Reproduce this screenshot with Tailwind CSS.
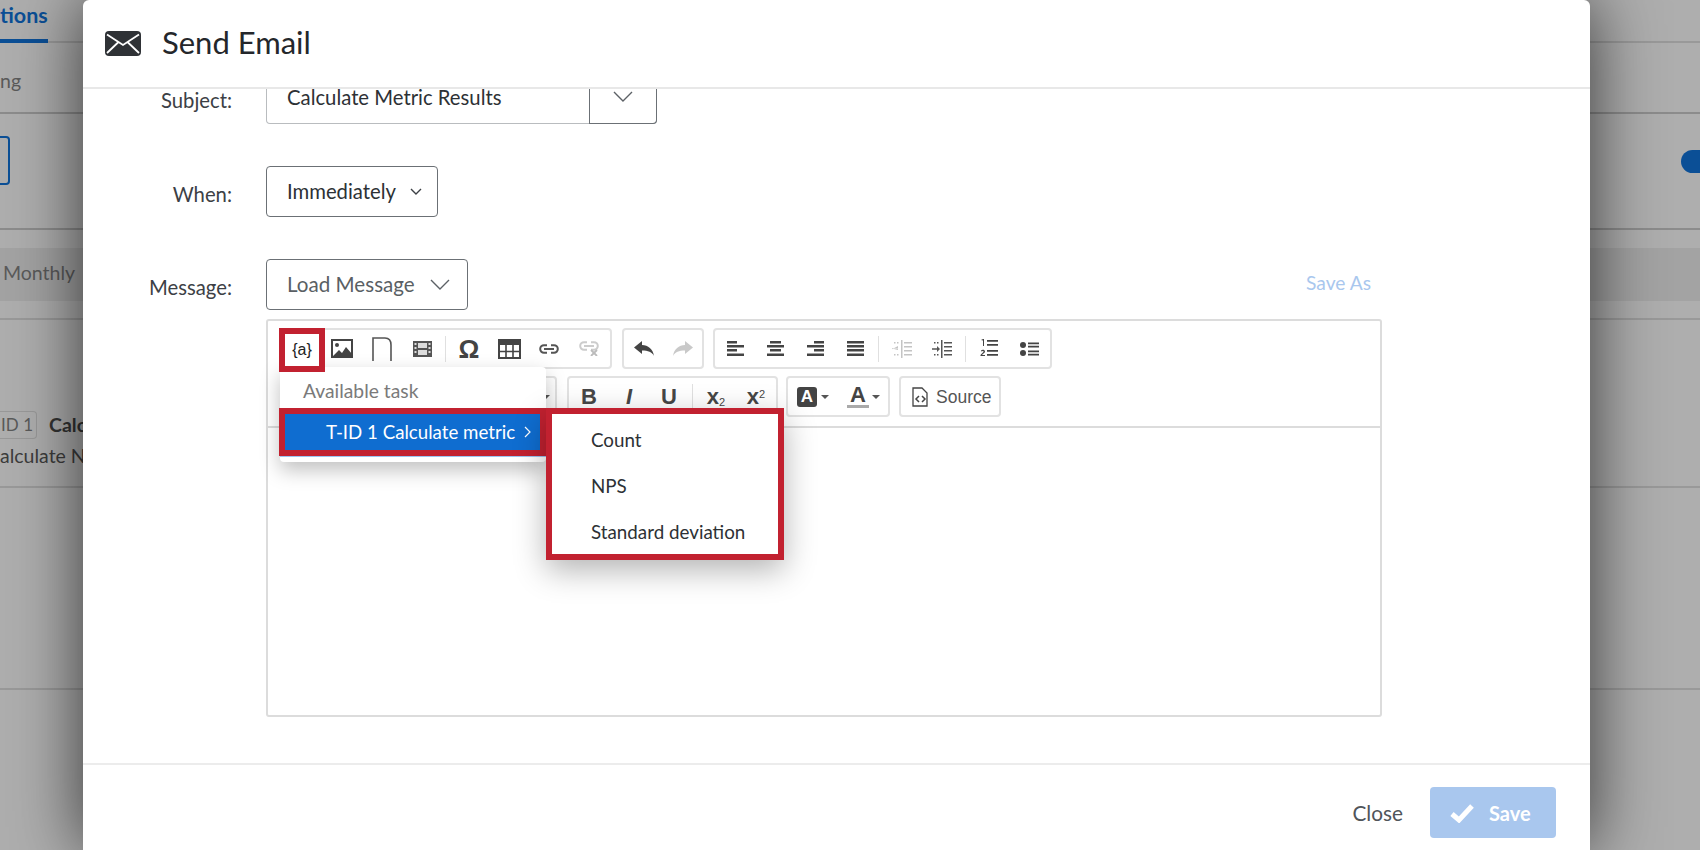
<!DOCTYPE html>
<html lang="en">
<head>
    <meta charset="UTF-8">
    <title>Send Email</title>
    <script src="https://cdn.jsdelivr.net/npm/@tailwindcss/browser@4"></script>
</head>
<body class="bg-[#aeaeae] font-['Lato','Open_Sans',sans-serif] text-[#32373c]">
<div class="relative w-[1700px] h-[850px] overflow-hidden">

    <!-- page behind the modal -->
    <div class="text-[19.500px] text-[#5a5a5a]">
        <div class="h-[43px] border-b-2 border-[#999]">
            <div class="w-[48px] h-[43px] border-b-4 border-[#0b4f96] text-right text-[21.500px] font-bold text-[#0b4f96] leading-[30px] pr-[3px] whitespace-nowrap">tions</div>
        </div>
        <div class="h-[71px] border-b-2 border-[#8c8c8c] pt-[25px] leading-[26px]">ng</div>
        <div class="h-[116px] border-b-2 border-[#8c8c8c] flex justify-between items-start pt-[22px]">
            <div class="w-[10px] h-[49px] border-2 border-l-0 border-[#0b4f96] rounded-r-[4px]"></div>
            <div class="w-[19px] h-[23px] mt-[14px] bg-[#0b4f96] rounded-l-full"></div>
        </div>
        <div class="h-[90px] border-b-2 border-[#999] pt-[18px]">
            <div class="h-[53px] bg-[#a3a3a3] pl-[3px] leading-[50px]">Monthly</div>
        </div>
        <div class="h-[168px] border-b-2 border-[#999] pt-[91px]">
            <div class="flex items-center h-[28px]">
                <span class="w-[37px] h-[28px] border border-[#999] border-l-0 rounded-r-[4px] text-[17px] text-right pr-[3px] leading-[26px]">ID 1</span>
                <span class="ml-[12px] font-bold text-[#333]">Calculate</span>
            </div>
            <div class="mt-[2px] text-[#3c3c3c] whitespace-nowrap">alculate N</div>
        </div>
        <div class="h-[202px] border-b-2 border-[#999]"></div>
    </div>

    <!-- modal -->
    <div class="absolute left-[83px] top-0 w-[1507px] h-[850px] bg-white rounded-t-[6px] shadow-[0_0_70px_rgba(0,0,0,0.7)] flex flex-col">
        <div class="h-[89px] shrink-0 border-b-2 border-[#e8e8e8] flex items-center pl-[22px]">
            <svg class="w-[36px] h-[25px]" viewBox="0 0 36 25"><rect width="36" height="25" rx="4" fill="#2f3236"/><path d="M2 3.500 L18 14 L34 3.500 M2 22 L13 11.500 M34 22 L23 11.500" fill="none" stroke="#fff" stroke-width="1.800"/></svg>
            <span class="ml-[21px] text-[31px] leading-[36px] -mt-[3px] text-[#24272b]">Send Email</span>
        </div>

        <div class="flex-1 text-[20.300px]">
            <div class="flex">
                <div class="w-[149px] text-right pt-px leading-[20px] text-[#3c4045]">Subject:</div>
                <div class="ml-[34px] w-[391px] h-[35px] flex border border-t-0 border-[#b9bcbf] rounded-b-[4px]">
                    <div class="flex-1 pl-[20px] leading-[17px] text-[#2d3135]">Calculate Metric Results</div>
                    <div class="w-[68px] border border-[#6b7075] border-t-0 -mr-px -mb-px rounded-br-[4px] flex justify-center pt-[2px]">
                        <svg class="w-[20px] h-[11px]" viewBox="0 0 20 11"><path d="M1 1l9 9 9-9" fill="none" stroke="#5c6166" stroke-width="1.400"/></svg>
                    </div>
                </div>
            </div>
            <div class="flex mt-[42px]">
                <div class="w-[149px] text-right pt-[15px] leading-[26px] text-[#3c4045]">When:</div>
                <div class="ml-[34px] w-[172px] h-[51px] border border-[#6b7075] rounded-[4px] flex items-center pl-[20px]">
                    <span class="text-[#2d3135]">Immediately</span>
                    <svg class="ml-[14px] w-[12px] h-[7px]" viewBox="0 0 12 7"><path d="M1 1l5 5 5-5" fill="none" stroke="#3c4045" stroke-width="1.400"/></svg>
                </div>
            </div>
            <div class="flex mt-[42px]">
                <div class="w-[149px] text-right pt-[15px] leading-[26px] text-[#3c4045]">Message:</div>
                <div class="ml-[34px] flex-1 mr-[208px]">
                    <div class="flex justify-between items-start">
                        <div class="w-[202px] h-[51px] border border-[#6b7075] rounded-[4px] flex items-center pl-[20px]">
                            <span class="text-[20.600px] text-[#5a5f64]">Load Message</span>
                            <svg class="ml-[15px] w-[20px] h-[11px]" viewBox="0 0 20 11"><path d="M1 1l9 9 9-9" fill="none" stroke="#5c6166" stroke-width="1.400"/></svg>
                        </div>
                        <div class="mr-[11px] mt-[11px] text-[19.200px] leading-[26px] text-[#a9c7ee]">Save As</div>
                    </div>

                    <!-- editor -->
                    <div class="relative mt-[9px] h-[398px] border-2 border-[#dcdcdc] rounded-[3px] font-['Liberation_Sans',Arial,sans-serif]">
                        <div class="h-[107px] border-b-2 border-[#dcdcdc] pl-[12px] pt-[7px] text-[#474747]">
                            <div class="flex h-[41px]">
                                <div class="flex pr-px border-2 border-[#e2e2e2] rounded-[4px] items-center">
                                    <div class="w-[40px]"></div>
                                    <div class="w-[40px] flex justify-center">
                                        <svg class="w-[22px] h-[19px]" viewBox="0 0 22 19"><rect x="1" y="1" width="20" height="17" fill="none" stroke="#444" stroke-width="2"/><circle cx="6" cy="6" r="2" fill="#444"/><path d="M2 17l6-6 3 3 4-6 6 7v2z" fill="#444"/></svg>
                                    </div>
                                    <div class="w-[40px] flex justify-center">
                                        <svg class="w-[20px] h-[24px]" viewBox="0 0 20 24"><path d="M1 24V1h12c4 0 6 3 6 7v16" fill="none" stroke="#555" stroke-width="1.600"/></svg>
                                    </div>
                                    <div class="w-[40px] flex justify-center">
                                        <svg class="w-[19px] h-[16px]" viewBox="0 0 19 16"><path d="M0 0h19v16H0z" fill="#555"/><path d="M5 2h9v5H5zM5 9h9v5H5z" fill="#ddd"/><path d="M1.500 2h2v2h-2zM1.500 6h2v2h-2zM1.500 10h2v2h-2zM15.500 2h2v2h-2zM15.500 6h2v2h-2zM15.500 10h2v2h-2z" fill="#ddd"/></svg>
                                    </div>
                                    <div class="w-px h-[26px] mx-[3px] bg-[#e0e0e0]"></div>
                                    <div class="w-[40px] text-center text-[26px] leading-[30px] font-bold text-[#444]">Ω</div>
                                    <div class="w-[40px] flex justify-center">
                                        <svg class="w-[23px] h-[20px]" viewBox="0 0 23 20"><rect x="1" y="1" width="21" height="18" fill="none" stroke="#444" stroke-width="2"/><rect x="1" y="1" width="21" height="5" fill="#444"/><path d="M8 6v13M15 6v13M1 12.500h21" stroke="#444" stroke-width="1.600"/></svg>
                                    </div>
                                    <div class="w-[40px] flex justify-center">
                                        <svg class="w-[20px] h-[10px]" viewBox="0 0 20 10"><path d="M8 1.200H5a3.800 3.800 0 0 0 0 7.600h3M12 1.200h3a3.800 3.800 0 0 1 0 7.600h-3M5 5h10" fill="none" stroke="#555" stroke-width="2"/></svg>
                                    </div>
                                    <div class="w-[40px] flex justify-center">
                                        <svg class="w-[20px] h-[15px]" viewBox="0 0 20 15"><path d="M8 1.200H5a3.800 3.800 0 0 0 0 7.600h3M12 1.200h3a3.800 3.800 0 0 1 0 7.600h-3M5 5h10" fill="none" stroke="#ccc" stroke-width="2"/><path d="M12 9l6 6M18 9l-6 6" stroke="#bbb" stroke-width="1.800"/></svg>
                                    </div>
                                </div>
                                <div class="ml-[10px] flex border-2 border-[#e2e2e2] rounded-[4px] items-center">
                                    <div class="w-[39px] flex justify-center">
                                        <svg class="w-[20px] h-[15px]" viewBox="0 0 20 15"><path d="M0 6.500L8 0v4c6 0 11 4 12 11-2-4-6-5.500-12-5.500V13z" fill="#444"/></svg>
                                    </div>
                                    <div class="w-[39px] flex justify-center">
                                        <svg class="w-[20px] h-[15px]" viewBox="0 0 20 15"><path d="M20 6.500L12 0v4C6 4 1 8 0 15c2-4 6-5.500 12-5.500V13z" fill="#c9c9c9"/></svg>
                                    </div>
                                </div>
                                <div class="ml-[9px] flex pr-px border-2 border-[#e2e2e2] rounded-[4px] items-center">
                                    <div class="w-[40px] flex justify-center">
                                        <svg class="w-[17px] h-[15px]" viewBox="0 0 17 15" fill="#444"><path d="M0 0h10v2.500H0zM0 4h17v2.500H0zM0 8h10v2.500H0zM0 12.500h17V15H0z"/></svg>
                                    </div>
                                    <div class="w-[40px] flex justify-center">
                                        <svg class="w-[17px] h-[15px]" viewBox="0 0 17 15" fill="#444"><path d="M3 0h11v2.500H3zM0 4h17v2.500H0zM3 8h11v2.500H3zM0 12.500h17V15H0z"/></svg>
                                    </div>
                                    <div class="w-[40px] flex justify-center">
                                        <svg class="w-[17px] h-[15px]" viewBox="0 0 17 15" fill="#444"><path d="M7 0h10v2.500H7zM0 4h17v2.500H0zM7 8h10v2.500H7zM0 12.500h17V15H0z"/></svg>
                                    </div>
                                    <div class="w-[40px] flex justify-center">
                                        <svg class="w-[17px] h-[15px]" viewBox="0 0 17 15" fill="#444"><path d="M0 0h17v2.500H0zM0 4h17v2.500H0zM0 8h17v2.500H0zM0 12.500h17V15H0z"/></svg>
                                    </div>
                                    <div class="w-px h-[26px] mx-[3px] bg-[#e0e0e0]"></div>
                                    <div class="w-[40px] flex justify-center">
                                        <svg class="w-[20px] h-[18px]" viewBox="0 0 20 18" fill="#c4c4c4"><path d="M9 0h1.500v18H9zM12 2h8v1.500h-8zM12 6h8v1.500h-8zM12 10h8v1.500h-8zM12 14h8v1.500h-8zM0 8.300h6V6l-6 3.200z"/><path d="M0 8.500h6V10z"/><path d="M2 2h1.500v1.500H2zM5 2h1.500v1.500H5zM2 14h1.500v1.500H2zM5 14h1.500v1.500H5z"/></svg>
                                    </div>
                                    <div class="w-[40px] flex justify-center">
                                        <svg class="w-[20px] h-[18px]" viewBox="0 0 20 18" fill="#555"><path d="M9 0h1.500v18H9zM12 2h8v1.500h-8zM12 6h8v1.500h-8zM12 10h8v1.500h-8zM12 14h8v1.500h-8zM0 8.200h5V6l3 3-3 3V9.800H0z"/><path d="M2 2h1.500v1.500H2zM5 2h1.500v1.500H5zM2 14h1.500v1.500H2zM5 14h1.500v1.500H5z"/></svg>
                                    </div>
                                    <div class="w-px h-[26px] mx-[3px] bg-[#e0e0e0]"></div>
                                    <div class="w-[40px] flex justify-center">
                                        <svg class="w-[18px] h-[19px]" viewBox="0 0 18 19" fill="#444"><path d="M7 1h11v1.800H7zM7 5h11v1.800H7zM7 11h11v1.800H7zM7 15h11v1.800H7zM1 1l2-1h1v7H3V1.500zM1 11.500c1-1 4-1 4 1 0 1.500-2 2-3 3.500h3v1H0.500v-1c1-1.500 3-2.500 3-3.500 0-.8-1.500-.5-2.200 0z"/></svg>
                                    </div>
                                    <div class="w-[40px] flex justify-center">
                                        <svg class="w-[19px] h-[14px]" viewBox="0 0 19 14" fill="#444"><circle cx="3" cy="3" r="3"/><circle cx="3" cy="11" r="3"/><path d="M8 0.500h11v1.800H8zM8 3.700h11v1.800H8zM8 8.500h11v1.800H8zM8 11.700h11v1.800H8z"/></svg>
                                    </div>
                                </div>
                            </div>
                            <div class="flex h-[41px] mt-[7px]">
                                <div class="w-[277px] border-2 border-[#e2e2e2] rounded-[4px] flex items-center justify-end pr-[5px]">
                                    <span class="w-0 h-0 border-x-[4px] border-x-transparent border-t-[4px] border-t-[#555]"></span>
                                </div>
                                <div class="ml-[10px] flex border-2 border-[#e2e2e2] rounded-[4px] items-center text-[22px] font-bold leading-[30px]">
                                    <div class="w-[40px] text-center">B</div>
                                    <div class="w-[40px] text-center italic">I</div>
                                    <div class="w-[40px] text-center"><span class="border-b-2 border-[#444] leading-[22px] inline-block">U</span></div>
                                    <div class="w-px h-[26px] mx-[3px] bg-[#e0e0e0]"></div>
                                    <div class="w-[40px] text-center">x<sub class="text-[11px] font-normal">2</sub></div>
                                    <div class="w-[40px] text-center">x<sup class="text-[11px] font-normal">2</sup></div>
                                </div>
                                <div class="ml-[8px] flex border-2 border-[#e2e2e2] rounded-[4px] items-center">
                                    <div class="w-[50px] flex items-center pl-[9px]">
                                        <span class="w-[20px] h-[20px] rounded-[3px] bg-[#444] text-white text-[17px] font-bold leading-[20px] text-center">A</span>
                                        <span class="ml-[4px] w-0 h-0 border-x-[4px] border-x-transparent border-t-[4px] border-t-[#555]"></span>
                                    </div>
                                    <div class="w-[50px] flex items-center pl-[9px]">
                                        <span class="w-[22px] h-[23px] border-b-[3px] border-[#aaa] text-[22px] font-bold leading-[20px] text-center text-[#444]">A</span>
                                        <span class="ml-[3px] w-0 h-0 border-x-[4px] border-x-transparent border-t-[4px] border-t-[#555]"></span>
                                    </div>
                                </div>
                                <div class="ml-[9px] w-[102px] border-2 border-[#e2e2e2] rounded-[4px] flex items-center pl-[11px]">
                                    <svg class="w-[16px] h-[20px]" viewBox="0 0 16 20"><path d="M1 1h9l5 5v13H1z" fill="none" stroke="#444" stroke-width="1.300"/><path d="M7 9l-3 3 3 3M10 9l3 3-3 3" fill="none" stroke="#444" stroke-width="1.500"/></svg>
                                    <span class="ml-[8px] text-[17.500px] leading-[20px] text-[#555]">Source</span>
                                </div>
                            </div>
                        </div>

                        <!-- variables menu -->
                        <div class="absolute left-[12px] top-[46px] w-[266px] h-[95px] bg-white rounded-[4px] shadow-[0_8px_20px_rgba(0,0,0,0.25)] font-['Lato',sans-serif]">
                            <div class="h-[41px] pl-[23px] pt-[11px] text-[19.300px] leading-[26px] text-[#7a7a7a]">Available task</div>
                            <div class="h-[48px] border-[6px] border-[#c22130] bg-[#0f6dd0] flex items-center pl-[41px] text-[18.700px] text-white whitespace-nowrap w-[267px] -ml-px">
                                <span>T-ID 1 Calculate metric</span>
                                <svg class="ml-[9px] w-[7px] h-[12px]" viewBox="0 0 7 12"><path d="M1 1l5 5-5 5" fill="none" stroke="#fff" stroke-width="1.200"/></svg>
                            </div>
                            <div class="h-px bg-[#9cc4f0]"></div>
                        </div>

                        <!-- submenu -->
                        <div class="absolute left-[278px] top-[87px] w-[238px] h-[152px] bg-white border-[6px] border-[#c22130] shadow-[0_10px_30px_rgba(0,0,0,0.3)] pl-[39px] pt-[10px] font-['Lato',sans-serif] text-[18.800px] text-[#2d3135]">
                            <div class="h-[46px] leading-[26px] pt-[3px]">Count</div>
                            <div class="h-[46px] leading-[26px] pt-[3px]">NPS</div>
                            <div class="h-[46px] leading-[26px] pt-[3px]">Standard deviation</div>
                        </div>

                        <!-- red highlight round the placeholder button -->
                        <div class="absolute left-[11px] top-[7px] w-[46px] h-[44px] border-[6px] border-[#c22130] bg-white flex items-center justify-center text-[16px] text-[#222]">{a}</div>
                    </div>
                </div>
            </div>
        </div>

        <div class="h-[87px] shrink-0 border-t-2 border-[#ececec] flex items-start justify-end pr-[34px] pt-[22px]">
            <span class="text-[20.800px] leading-[51px] text-[#50555a]">Close</span>
            <div class="ml-[27px] w-[126px] h-[51px] bg-[#a9c7ee] rounded-[4px] flex items-center pl-[20px] text-white font-bold text-[20px]">
                <svg class="w-[24px] h-[20px]" viewBox="0 0 24 20"><path d="M2 11l7 6L22 3" fill="none" stroke="#fff" stroke-width="5"/></svg>
                <span class="ml-[15px]">Save</span>
            </div>
        </div>
    </div>
</div>
</body>
</html>
